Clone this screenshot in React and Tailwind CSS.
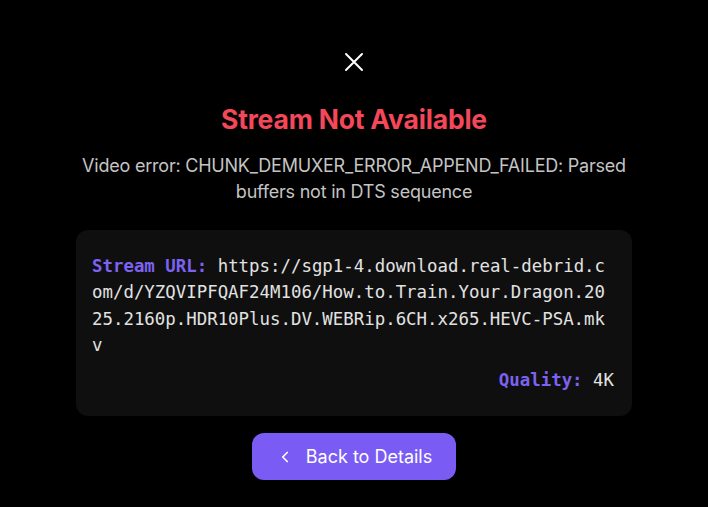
import React from 'react';
import { ChevronLeft } from 'lucide-react';

const App = () => {
  return (
    <div className="min-h-screen w-full bg-black flex flex-col items-center pt-[52px] font-['Inter',sans-serif]">
      {/* Close */}
      <button className="w-[20px] h-[20px] flex items-center justify-center text-white">
        <svg width="20" height="20" viewBox="0 0 20 20" fill="none" stroke="currentColor" strokeWidth="2" strokeLinecap="round">
          <path d="M2 2 L18 18 M18 2 L2 18" />
        </svg>
      </button>

      <h1 className="mt-[30px] text-[26.5px] leading-[34px] font-bold text-[#f4475a] tracking-[-0.2px]">Stream Not Available</h1>

      <p className="mt-[17px] w-[560px] text-center text-[18px] leading-[26px] text-[#c4c4c4] tracking-[-0.22px]">
        Video error: CHUNK_DEMUXER_ERROR_APPEND_FAILED: Parsed buffers not in DTS sequence
      </p>

      {/* Stream info card */}
      <div className="mt-[25px] w-[556px] rounded-[12px] bg-[#0f0f0f] pl-[16px] pr-[18px] pt-[23px] pb-[23px] font-['DejaVu_Sans_Mono',monospace] text-[17.4px] leading-[26.4px]">
        <p className="break-all text-[#e2e2e2]">
          <span className="font-bold text-[#7d62f2]">Stream URL:</span>{' '}
          https://sgp1-4.download.real-debrid.com/d/YZQVIPFQAF24M106/How.to.Train.Your.Dragon.2025.2160p.HDR10Plus.DV.WEBRip.6CH.x265.HEVC-PSA.mkv
        </p>
        <p className="mt-[8px] text-right text-[#e2e2e2]">
          <span className="font-bold text-[#7d62f2]">Quality:</span> 4K
        </p>
      </div>

      <button className="mt-[17px] w-[204px] h-[47px] rounded-[12px] bg-[#7a5cf4] flex items-center justify-center gap-[12px] text-white text-[18px]">
        <ChevronLeft className="w-[18px] h-[18px]" strokeWidth={2.2} />
        <span>Back to Details</span>
      </button>
    </div>
  );
};

export default App;
